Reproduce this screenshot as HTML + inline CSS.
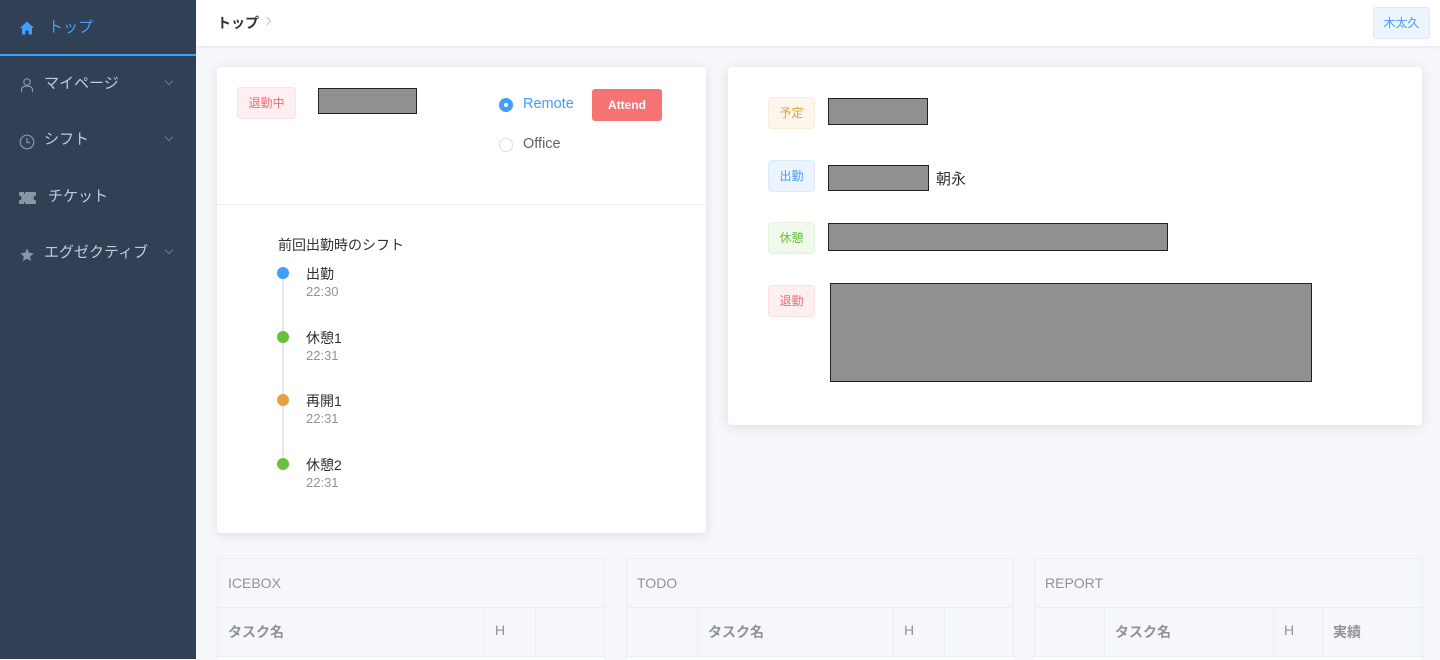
<!DOCTYPE html>
<html><head><meta charset="utf-8"><style>
*{box-sizing:border-box;margin:0;padding:0}
body{width:1440px;height:659px;overflow:hidden;background:#f5f7fa;font-family:"Liberation Sans","Noto Sans CJK JP",sans-serif;position:relative;color:#303133}
.a{position:absolute}
#side{left:0;top:0;width:196px;height:659px;background:#304156}
.mi{position:absolute;left:0;width:196px;color:#bfcbd9;font-size:15px}
.mi span{position:absolute;left:44px;top:-11px}
.chev{position:absolute;left:166px;top:-5px;width:6px;height:6px;border-right:1px solid #6f7c8e;border-bottom:1px solid #6f7c8e;transform:rotate(45deg)}
#hdr{left:196px;top:0;width:1244px;height:46px;background:#fff;box-shadow:0 1px 4px rgba(0,21,41,.08)}
.card{background:#fff;border-radius:4px;box-shadow:0 2px 12px rgba(0,0,0,.1)}
.tag{position:absolute;height:32px;line-height:30px;font-size:12px;border:1px solid;border-radius:4px;text-align:center}
.gray{position:absolute;background:#909090;border:1px solid #222}
.tl{position:absolute;font-size:14px;color:#303133}
.tl b{font-weight:normal;display:block}
.tl i{font-style:normal;font-size:13px;color:#909399;display:block;margin-top:0}
.dot{position:absolute;width:12px;height:12px;border-radius:50%}
.tbl{position:absolute;top:558px;height:101px;border:1px solid #ebeef5;background:#f5f7fa}
.tbl .h{position:absolute;left:0;top:0;right:0;height:49px;border-bottom:1px solid #ebeef5;font-size:14px;color:#909399;padding:16px 10px}
.tbl .c{position:absolute;top:49px;height:48px;border-right:1px solid #ebeef5;font-size:14px;color:#909399;font-weight:bold;padding:14px 10px}
.tbl .bt{position:absolute;left:0;right:0;top:97px;height:4px;background:#fff;border-top:1px solid #ebeef5}
</style></head><body>
<div id="side" class="a">
 <div class="a" style="left:0;top:54px;width:196px;height:2px;background:#409eff"></div>
 <svg class="a" style="left:19px;top:20px" width="16" height="16" viewBox="0 0 16 16"><path d="M8 1.5L1 8h2v6.5h3.5v-4h3v4H13V8h2z" fill="#409eff"/></svg>
 <div class="a" style="left:48px;top:16px;color:#409eff;font-size:15px">トップ</div>
 <div class="mi" style="top:83px"><svg class="a" style="left:19px;top:-6px" width="16" height="16" viewBox="0 0 16 16" fill="none" stroke="#8a96a6" stroke-width="1.2"><circle cx="8" cy="5" r="3.2"/><path d="M2.5 15v-2.5c0-2 2.5-3.5 5.5-3.5s5.5 1.5 5.5 3.5V15"/></svg><span>マイページ</span><i class="chev"></i></div>
 <div class="mi" style="top:139px"><svg class="a" style="left:19px;top:-5px" width="16" height="16" viewBox="0 0 16 16" fill="none" stroke="#8a96a6" stroke-width="1.2"><circle cx="8" cy="8" r="6.8"/><path d="M8 4v4.5h3"/></svg><span>シフト</span><i class="chev"></i></div>
 <div class="mi" style="top:196px"><svg class="a" style="left:19px;top:-4px" width="17" height="12" viewBox="0 0 17 12"><path d="M0 0h5v2h1V0h11v3.5a2.5 2.5 0 000 5V12H6v-2H5v2H0V8.5a2.5 2.5 0 000-5z" fill="#8a96a6"/></svg><span style="left:48px">チケット</span></div>
 <div class="mi" style="top:252px"><svg class="a" style="left:20px;top:-4px" width="14" height="14" viewBox="0 0 14 14"><path d="M7 .5l2 4.3 4.6.5-3.4 3.2.9 4.6L7 10.8 2.9 13.1l.9-4.6L.4 5.3 5 4.8z" fill="#8a96a6"/></svg><span>エグゼクティブ</span><i class="chev"></i></div>
</div>
<div id="hdr" class="a">
 <div class="a" style="left:21px;top:13px;font-size:14px;font-weight:bold;color:#303133">トップ</div>
 <div class="a" style="left:68px;top:18px;width:6px;height:6px;border-right:1px solid #c0c4cc;border-top:1px solid #c0c4cc;transform:rotate(45deg)"></div>
 <div class="a" style="left:1177px;top:7px;width:57px;height:32px;background:#ecf5ff;border:1px solid #d9ecff;border-radius:3px;color:#409eff;font-size:12px;line-height:30px;text-align:center">木太久</div>
</div>
<div class="a card" style="left:217px;top:67px;width:489px;height:466px">
 <div class="tag" style="left:20px;top:20px;width:59px;background:#fef0f0;border-color:#fde2e2;color:#f56c6c">退勤中</div>
 <div class="gray" style="left:101px;top:21px;width:99px;height:26px"></div>
 <div class="a" style="left:282px;top:31px;width:14px;height:14px;border-radius:50%;background:#409eff"><div class="a" style="left:5px;top:5px;width:4px;height:4px;border-radius:50%;background:#fff"></div></div>
 <div class="a" style="left:306px;top:29px;font-size:14.5px;color:#409eff">Remote</div>
 <div class="a" style="left:375px;top:22px;width:70px;height:32px;background:#f56c6c;border-radius:3px;color:#fff;font-size:12px;font-weight:bold;line-height:32px;text-align:center;opacity:.95">Attend</div>
 <div class="a" style="left:282px;top:71px;width:14px;height:14px;border-radius:50%;border:1px solid #dcdfe6"></div>
 <div class="a" style="left:306px;top:69px;font-size:14.5px;color:#606266">Office</div>
 <div class="a" style="left:0;top:137px;width:489px;height:1px;background:#ebeef5"></div>
 <div class="a" style="left:61px;top:168px;font-size:14px;color:#303133">前回出勤時のシフト</div>
 <div class="a" style="left:65px;top:212px;width:2px;height:178px;background:#e4e7ed"></div>
 <div class="dot" style="left:60px;top:200px;background:#409eff"></div>
 <div class="dot" style="left:60px;top:264px;background:#67c23a"></div>
 <div class="dot" style="left:60px;top:327px;background:#e6a23c"></div>
 <div class="dot" style="left:60px;top:391px;background:#67c23a"></div>
 <div class="tl" style="left:89px;top:197px"><b>出勤</b><i>22:30</i></div>
 <div class="tl" style="left:89px;top:261px"><b>休憩1</b><i>22:31</i></div>
 <div class="tl" style="left:89px;top:324px"><b>再開1</b><i>22:31</i></div>
 <div class="tl" style="left:89px;top:388px"><b>休憩2</b><i>22:31</i></div>
</div>
<div class="a card" style="left:728px;top:67px;width:694px;height:358px">
 <div class="tag" style="left:40px;top:30px;width:47px;background:#fdf6ec;border-color:#faecd8;color:#e6a23c">予定</div>
 <div class="gray" style="left:100px;top:31px;width:100px;height:27px"></div>
 <div class="tag" style="left:40px;top:93px;width:47px;background:#ecf5ff;border-color:#d9ecff;color:#409eff">出勤</div>
 <div class="gray" style="left:100px;top:98px;width:101px;height:26px"></div>
 <div class="a" style="left:208px;top:101px;font-size:15px;color:#303133">朝永</div>
 <div class="tag" style="left:40px;top:155px;width:47px;background:#f0f9eb;border-color:#e1f3d8;color:#67c23a">休憩</div>
 <div class="gray" style="left:100px;top:156px;width:340px;height:28px"></div>
 <div class="tag" style="left:40px;top:218px;width:47px;background:#fef0f0;border-color:#fde2e2;color:#f56c6c">退勤</div>
 <div class="gray" style="left:102px;top:216px;width:482px;height:99px"></div>
</div>
<div class="tbl" style="left:217px;width:388px"><div class="h">ICEBOX</div>
 <div class="c" style="left:0;width:267px">タスク名</div><div class="c" style="left:267px;width:51px;font-weight:normal">H</div><div class="c" style="left:318px;width:69px;border-right:0"></div><div class="bt"></div></div>
<div class="tbl" style="left:626px;width:388px"><div class="h">TODO</div>
 <div class="c" style="left:0;width:71px"></div><div class="c" style="left:71px;width:196px">タスク名</div><div class="c" style="left:267px;width:51px;font-weight:normal">H</div><div class="c" style="left:318px;width:69px;border-right:0"></div><div class="bt"></div></div>
<div class="tbl" style="left:1034px;width:389px"><div class="h">REPORT</div>
 <div class="c" style="left:0;width:70px"></div><div class="c" style="left:70px;width:169px">タスク名</div><div class="c" style="left:239px;width:49px;font-weight:normal">H</div><div class="c" style="left:288px;width:100px;border-right:0">実績</div><div class="bt"></div></div>
</body></html>
